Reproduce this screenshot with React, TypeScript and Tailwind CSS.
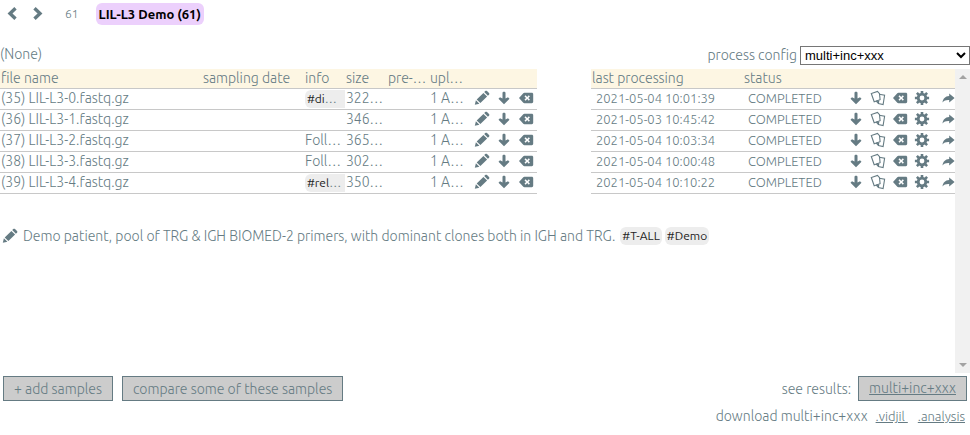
import type { ReactNode } from "react";

type Sample = {
  id: number;
  name: string;
  tag?: string;
  note?: string;
  size: string;
  processed: string;
};

const samples: Sample[] = [
  { id: 35, name: "LIL-L3-0.fastq.gz", tag: "#di", size: "322…", processed: "2021-05-04 10:01:39" },
  { id: 36, name: "LIL-L3-1.fastq.gz", size: "346…", processed: "2021-05-03 10:45:42" },
  { id: 37, name: "LIL-L3-2.fastq.gz", note: "Foll…", size: "365…", processed: "2021-05-04 10:03:34" },
  { id: 38, name: "LIL-L3-3.fastq.gz", note: "Foll…", size: "302…", processed: "2021-05-04 10:00:48" },
  { id: 39, name: "LIL-L3-4.fastq.gz", tag: "#rel", size: "350…", processed: "2021-05-04 10:10:22" },
];

function Glyph({ children }: { children: ReactNode }) {
  return (
    <svg viewBox="0 0 16 16" className="block size-4" fill="currentColor" aria-hidden="true">
      {children}
    </svg>
  );
}

const Pencil = () => (
  <Glyph>
    <path d="M.8 14.800l1.100-4.600 3.500 3.500zM2.700 9.400l6.700-6.500 3.700 3.700-6.700 6.500zM10.200 2.100l1.100-1.100c.5-.5 1.200-.5 1.700 0l2 2c.5.5.5 1.200 0 1.700l-1.100 1.100z" />
  </Glyph>
);

const Down = () => (
  <Glyph>
    <path d="M6.500 2.800c0-.7.600-1.100 1.500-1.100s1.500.4 1.500 1.100v5.600l2.500-1.200 1.500 1.500L8 14.200 2.500 8.700 4 7.200l2.500 1.200z" />
  </Glyph>
);

const Erase = () => (
  <Glyph>
    <path
      fillRule="evenodd"
      d="M1 8l4.300-4.700c.3-.3.7-.5 1.100-.5h7.400c.8 0 1.400.6 1.400 1.400v7.600c0 .8-.6 1.400-1.400 1.400H6.400c-.4 0-.8-.2-1.100-.5zM7.600 5.300L6.500 6.400 8.100 8l-1.600 1.600 1.100 1.100 1.600-1.600 1.600 1.600 1.100-1.100L10.300 8l1.600-1.600-1.100-1.100-1.600 1.600z"
    />
  </Glyph>
);

const Docs = () => (
  <Glyph>
    <g fill="none" stroke="currentColor" strokeWidth="1.100">
      <path d="M4.200 11.700L1.300 3.500l6.200-2 2 2.200.6 6z" />
      <path d="M9.300 4.300l5.300 1-1.500 9.200-4.700-.9-1.900-2.200.1-.6M8.400 13.500l.3-2.300-2.200-.2" />
    </g>
  </Glyph>
);

const Cog = () => (
  <Glyph>
    <circle cx="8" cy="8" r="3.800" fill="none" stroke="currentColor" strokeWidth="2.800" />
    <path
      fill="none"
      stroke="currentColor"
      strokeWidth="2.600"
      d="M8 .9v2.600M8 12.500v2.600M.9 8h2.600M12.500 8h2.600M2.900 2.900l1.900 1.900M11.200 11.200l1.900 1.900M2.900 13.100l1.900-1.900M11.200 4.800l1.900-1.900"
    />
  </Glyph>
);

const Forward = () => (
  <Glyph>
    <path d="M9.200 3.500L14.600 8l-5.400 4.500V10.100c-3.200-.2-5 .5-6.700 2.400.5-3.900 2.600-6.200 6.700-6.500z" />
  </Glyph>
);

const Chevron = ({ d }: { d: string }) => (
  <Glyph>
    <path fill="none" stroke="currentColor" strokeWidth="3.400" d={d} />
  </Glyph>
);

function IconButton({ label, children }: { label: string; children: ReactNode }) {
  return (
    <button type="button" aria-label={label} title={label} className="block cursor-pointer">
      {children}
    </button>
  );
}

function IconCell({ label, children }: { label: string; children: ReactNode }) {
  return (
    <td className="border-b border-[#c8c8c8] pb-0.5 pl-1">
      <IconButton label={label}>{children}</IconButton>
    </td>
  );
}

const head = "border-b border-[#c8c8c8] bg-[#fdf6e3] px-px text-left font-light";
const cell = "overflow-hidden border-b border-[#c8c8c8] px-px align-top leading-[18px]";
const smallCell = "border-b border-[#c8c8c8] pl-[5px] align-top text-[13px] leading-[18px]";
const tagStyle = "rounded-md bg-[#ededed] px-0.5 text-xs leading-[18px] font-normal text-[#222]";
const action = "h-[25px] border border-[#657b83] bg-[#cccccc] px-2.5 leading-[22px]";

function SampleTable() {
  return (
    <table className="w-full table-fixed border-separate border-spacing-0 whitespace-nowrap">
      <colgroup>
        <col />
        <col className="w-[102px]" />
        <col className="w-[41px]" />
        <col className="w-[42px]" />
        <col className="w-[42px]" />
        <col className="w-[41px]" />
        <col className="w-[22px]" />
        <col className="w-[22px]" />
        <col className="w-[23px]" />
        <col className="w-[54px]" />
        <col className="w-[152px]" />
        <col className="w-[101px]" />
        <col className="w-[22px]" />
        <col className="w-[22px]" />
        <col className="w-[22px]" />
        <col className="w-[26px]" />
        <col className="w-[19px]" />
      </colgroup>
      <thead>
        <tr className="h-5 leading-[19px]">
          <th className={head}>file name</th>
          <th className={head}>sampling date</th>
          <th className={head}>info</th>
          <th className={head}>size</th>
          <th className={head}>pre-…</th>
          <th className={head}>upl…</th>
          <th className={head} colSpan={3} />
          <th />
          <th className={head}>last processing</th>
          <th className={head}>status</th>
          <th className={head} colSpan={5} />
        </tr>
      </thead>
      <tbody>
        {samples.map((s) => (
          <tr key={s.id} className="h-[21px]">
            <td className={cell}>
              ({s.id}) {s.name}
            </td>
            <td className={cell} />
            <td className="overflow-hidden border-b border-[#c8c8c8] pl-px align-top leading-[18px]">
              {s.tag ? (
                <span className={`mt-px block rounded-r-none ${tagStyle}`}>
                  {s.tag}
                  <span className="text-[#657b83]">…</span>
                </span>
              ) : (
                s.note
              )}
            </td>
            <td className={cell}>{s.size}</td>
            <td className={cell} />
            <td className={cell}>1 A…</td>
            <IconCell label="edit sample"><Pencil /></IconCell>
            <IconCell label="download sample"><Down /></IconCell>
            <IconCell label="delete sample"><Erase /></IconCell>
            <td />
            <td className={smallCell}>{s.processed}</td>
            <td className={smallCell}>COMPLETED</td>
            <IconCell label="download result"><Down /></IconCell>
            <IconCell label="copy result"><Docs /></IconCell>
            <IconCell label="delete result"><Erase /></IconCell>
            <IconCell label="run configuration"><Cog /></IconCell>
            <IconCell label="see result"><Forward /></IconCell>
          </tr>
        ))}
      </tbody>
    </table>
  );
}

export default function App() {
  return (
    <div className="flex h-screen flex-col bg-white font-['Ubuntu','Noto_Sans',sans-serif] text-sm leading-5 font-light text-[#657b83]">
      <header className="flex h-7 shrink-0 items-center pl-1">
        <IconButton label="previous set"><Chevron d="M11.500 2.200L6 7.500l5.500 5.300" /></IconButton>
        <div className="w-2.5" />
        <IconButton label="next set"><Chevron d="M4.500 2.200L10 7.500l-5.500 5.300" /></IconButton>
        <span className="ml-[19px] text-xs">61</span>
        <h1 className="ml-[17px] rounded-md bg-[#ecd0fc] px-[3px] text-[13px] leading-[22px] font-bold text-black">
          LIL-L3 Demo (61)
        </h1>
      </header>

      <div className="mt-4 flex h-[25px] shrink-0 items-start justify-between">
        <span>(None)</span>
        <div className="flex items-end gap-[3px] pt-px">
          <label htmlFor="config">process config</label>
          <select
            id="config"
            className="h-[19px] w-[170px] appearance-auto rounded-none border border-[#767676] bg-white font-['Liberation_Sans',Arial,sans-serif] text-[13px] font-normal text-black"
          >
            <option>multi+inc+xxx</option>
          </select>
        </div>
      </div>

      <main className="flex min-h-0 flex-1">
        <div className="min-w-0 flex-1 overflow-hidden">
          <SampleTable />
          <p className="mt-8 flex items-center gap-[3px] pl-0.5">
            <IconButton label="edit information"><Pencil /></IconButton>
            <span className="px-0.5">
              Demo patient, pool of TRG &amp; IGH BIOMED-2 primers, with dominant clones both in IGH and TRG.
            </span>
            <span className={tagStyle}>#T-ALL</span>
            <span className={tagStyle}>#Demo</span>
          </p>
        </div>
        <div className="flex w-[15px] shrink-0 flex-col items-center justify-between bg-[#f1f1f1] py-1.5" aria-hidden="true">
          <svg viewBox="0 0 8 4" className="h-1 w-2" fill="#a3a3a3"><path d="M0 4l4-4 4 4z" /></svg>
          <svg viewBox="0 0 8 4" className="h-1 w-2" fill="#a3a3a3"><path d="M0 0l4 4 4-4z" /></svg>
        </div>
      </main>

      <footer className="flex shrink-0 items-start justify-between px-[3px] pt-[3px] pb-[9px]">
        <div className="flex gap-[9px]">
          <button type="button" className={action}>+ add samples</button>
          <button type="button" className={action}>compare some of these samples</button>
        </div>
        <div className="flex flex-col items-end gap-[5px]">
          <div className="flex items-center gap-[7px]">
            <span>see results:</span>
            <a href="#results" className={`${action} underline`}>multi+inc+xxx</a>
          </div>
          <div className="flex items-center pr-0.5">
            <span className="mr-2">download multi+inc+xxx</span>
            <a href="#vidjil" className="mr-2.5 text-[13px] whitespace-pre underline">.vidjil </a>
            <a href="#analysis" className="text-[13px] underline">.analysis</a>
          </div>
        </div>
      </footer>
    </div>
  );
}
